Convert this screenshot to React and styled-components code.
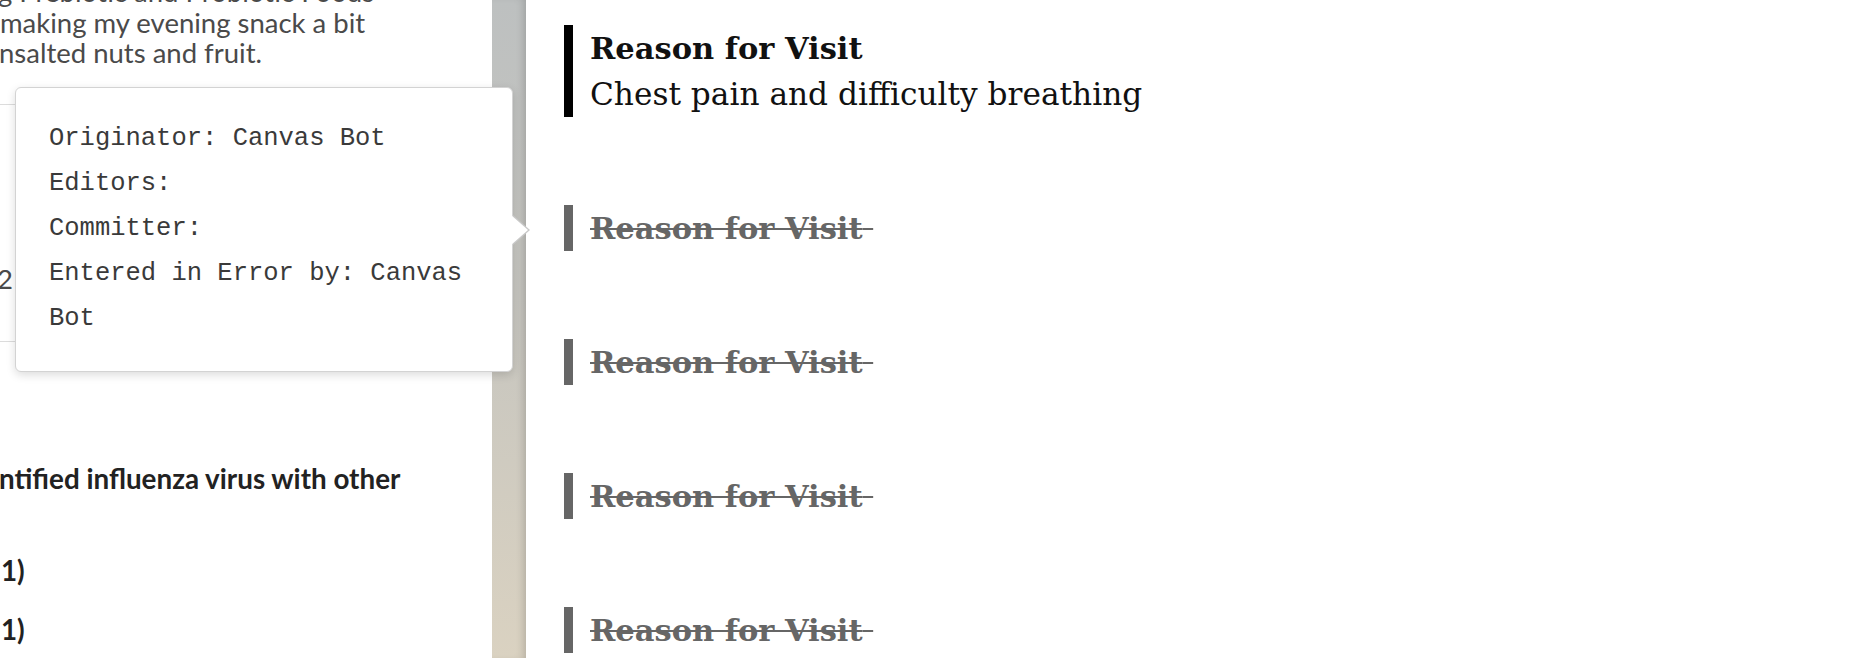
import React from "react";
import styled, { createGlobalStyle } from "styled-components";

const GlobalStyle = createGlobalStyle`
  html, body {
    margin: 0;
    padding: 0;
    background: #ffffff;
    overflow: hidden;
  }
  * { box-sizing: border-box; }
`;

const Page = styled.div`
  display: flex;
  width: 1858px;
  height: 658px;
  overflow: hidden;
  background: #ffffff;
`;

const LeftPanel = styled.aside`
  position: relative;
  width: 492px;
  flex: 0 0 492px;
  background: #ffffff;
  font-family: Lato, "Noto Sans", sans-serif;
  font-size: 27.5px;
  color: #4a4a4a;
  z-index: 2;
`;

const Prose = styled.div`
  margin-top: -23px;
  line-height: 30.5px;
`;

const ClippedLine = styled.div`
  white-space: nowrap;
  margin-left: ${(p) => p.$shift || 0}px;
  font-weight: ${(p) => (p.$bold ? 700 : 400)};
  color: ${(p) => (p.$bold ? "#222222" : "inherit")};
  font-size: ${(p) => (p.$bold ? "27.8px" : "inherit")};
`;

const DetailCard = styled.div`
  margin-top: 35px;
  height: 238px;
  border-top: 1px solid #dcdcdc;
  border-bottom: 1px solid #dcdcdc;
  padding-top: 159px;
  line-height: 30px;
`;

const Heading = styled.div`
  margin-top: 122px;
  line-height: 30px;
`;

const CodeList = styled.div`
  margin-top: 62px;
  display: flex;
  flex-direction: column;
  gap: 29px;
  line-height: 30px;
`;

const Tooltip = styled.div`
  position: absolute;
  left: 15px;
  top: 87px;
  width: 498px;
  padding: 28px 30px 30px 33px;
  background: #ffffff;
  border: 1px solid #d3d3d3;
  border-radius: 6px;
  box-shadow: 0 3px 10px rgba(0, 0, 0, 0.14);
  font-family: "Liberation Mono", "Courier New", monospace;
  font-size: 25.5px;
  line-height: 45px;
  color: #3a3a3a;

  &::before,
  &::after {
    content: "";
    position: absolute;
    top: 127px;
    width: 0;
    height: 0;
    border-style: solid;
  }
  &::before {
    right: -18px;
    border-width: 15px 0 15px 17px;
    border-color: transparent transparent transparent #c8c8c8;
  }
  &::after {
    right: -16px;
    border-width: 15px 0 15px 17px;
    border-color: transparent transparent transparent #ffffff;
  }
`;

const Divider = styled.div`
  width: 34px;
  flex: 0 0 34px;
  background: linear-gradient(180deg, #bdc0c0 0%, #c6c5bf 45%, #dad2c1 100%);
  box-shadow: inset -7px 0 8px -5px rgba(0, 0, 0, 0.18);
`;

const RightPanel = styled.main`
  flex: 1;
  padding: 25px 0 0 38px;
  display: flex;
  flex-direction: column;
  gap: 88px;
  background: #ffffff;
  font-family: "DejaVu Serif", "Liberation Serif", serif;
`;

const Entry = styled.section`
  display: flex;
  align-items: stretch;
`;

const Bar = styled.div`
  width: 9px;
  flex: 0 0 9px;
  background: ${(p) => (p.$voided ? "#666666" : "#000000")};
`;

const EntryBody = styled.div`
  padding-left: 17px;
  font-size: 31.2px;
  line-height: 46px;
`;

const EntryTitle = styled.div`
  font-weight: 700;
  font-size: 30.5px;
  color: ${(p) => (p.$voided ? "#666666" : "#111111")};
  text-decoration: ${(p) => (p.$voided ? "line-through" : "none")};
  text-decoration-thickness: 2px;
  white-space: nowrap;
`;

const EntryText = styled.div`
  color: #111111;
  white-space: nowrap;
`;

const voidedEntries = [1, 2, 3, 4];

export default function App() {
  return (
    <>
      <GlobalStyle />
      <Page>
        <LeftPanel>
          <Prose>
            <ClippedLine $shift={-2}>g Prebiotic and Probiotic Foods</ClippedLine>
            <ClippedLine>making my evening snack a bit</ClippedLine>
            <ClippedLine $shift={-1}>nsalted nuts and fruit.</ClippedLine>
          </Prose>
          <DetailCard>
            <ClippedLine $shift={-3}>2</ClippedLine>
          </DetailCard>
          <Heading>
            <ClippedLine $bold $shift={-1}>ntified influenza virus with other</ClippedLine>
          </Heading>
          <CodeList>
            <ClippedLine $bold $shift={1}>1)</ClippedLine>
            <ClippedLine $bold $shift={1}>1)</ClippedLine>
          </CodeList>
          <Tooltip role="tooltip">
            <div>Originator: Canvas Bot</div>
            <div>Editors:</div>
            <div>Committer:</div>
            <div>Entered in Error by: Canvas Bot</div>
          </Tooltip>
        </LeftPanel>
        <Divider />
        <RightPanel>
          <Entry>
            <Bar />
            <EntryBody>
              <EntryTitle>Reason for Visit</EntryTitle>
              <EntryText>Chest pain and difficulty breathing</EntryText>
            </EntryBody>
          </Entry>
          {voidedEntries.map((id) => (
            <Entry key={id}>
              <Bar $voided />
              <EntryBody>
                <EntryTitle $voided>Reason for Visit{"\u00a0"}</EntryTitle>
              </EntryBody>
            </Entry>
          ))}
        </RightPanel>
      </Page>
    </>
  );
}
